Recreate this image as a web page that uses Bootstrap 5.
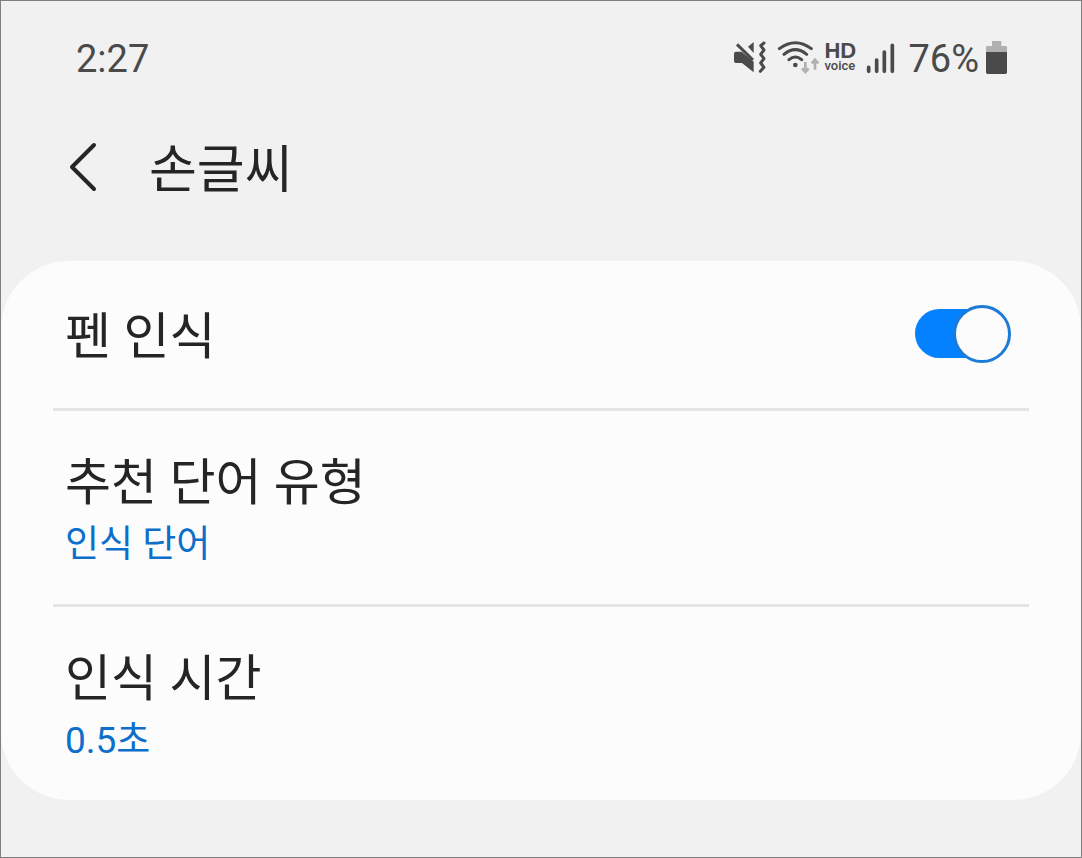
<!DOCTYPE html>
<html lang="ko">
<head>
<meta charset="utf-8">
<meta name="viewport" content="width=device-width, initial-scale=1">
<title>손글씨</title>
<link href="https://cdn.jsdelivr.net/npm/bootstrap@5.3.0/dist/css/bootstrap.min.css" rel="stylesheet">
<style>
  body { background: #f1f1f1; color: #252525; border: 1px solid #808080; font-family: Roboto, "Noto Sans CJK KR", sans-serif; }
  .status-bar { color: #4a4a4a; padding: 36px 73px 0 75px; font-size: 38px; line-height: 44px; }
  .status-icons { gap: 4px; }
  .status-icons svg, .hd-voice { margin-bottom: 5px; }
  .hd-voice { width: 38px; }
  .hd-top { font: 700 22px/18px "Liberation Sans", sans-serif; }
  .hd-bottom { font: 500 13px/11px Roboto, sans-serif; }
  .page-head { padding: 48px 64px 0; height: 180px; gap: 48px; }
  .page-head h1 { font-size: 52px; line-height: 84px; font-weight: 400; }
  .settings { --bs-list-group-bg: #fcfcfc; background: #fcfcfc; border-radius: 68px; padding: 0 52px; }
  .setting { min-height: 196px; padding: 2px 12px 0; border: 0; border-bottom: 3px solid #e5e5e5; background: transparent; color: #252525; font-size: 50px; line-height: 72px; }
  .setting:last-child { border-bottom: 0; min-height: 193px; }
  .setting.switch-row { min-height: 150px; padding: 0 18px 2px 12px; }
  .switch-row label { padding-top: 6px; }
  .setting-value { color: #0b6fcb; font-size: 37px; line-height: 52px; }
  .pen-switch { appearance: none; display: grid; align-items: center; width: 96px; height: 58px; margin: 0; cursor: pointer; }
  .pen-switch::before, .pen-switch::after { content: ""; grid-area: 1 / 1; }
  .pen-switch::before { width: 84px; height: 49px; border-radius: 25px; background: #0381fe; }
  .pen-switch::after { width: 58px; height: 58px; border-radius: 50%; border: 3px solid #1c7bd6; background: #fcfcfc; justify-self: end; }
  .pen-switch:not(:checked)::before { background: #b0b0b0; }
  .pen-switch:not(:checked)::after { justify-self: start; border-color: #909090; }
</style>
</head>
<body class="min-vh-100">
<header>
  <div class="status-bar d-flex justify-content-between">
    <time>2:27</time>
    <div class="status-icons d-flex align-items-center">
      <svg width="42" height="36" viewBox="30 24 126 108" fill="#4a4a4a" aria-hidden="true">
        <path d="M42 68q0-6 6-6h17l36 30v32L66 96H48q-6 0-6-6zM84 47l17-14v33z"/>
        <path d="M51 40l48 47" stroke="#4a4a4a" stroke-width="9"/>
        <path d="M132 36l-10 8 10 13-10 13 10 13-10 13 10 13-11 12" fill="none" stroke="#4a4a4a" stroke-width="9" stroke-linecap="round" stroke-linejoin="round"/>
      </svg>
      <svg width="44" height="36" viewBox="168 24 132 108" fill="none" stroke="#4a4a4a" stroke-width="9" stroke-linecap="round" aria-hidden="true">
        <path d="M178 53q48-36 96 0M192 70q34-28 68 0M207 86q19-16 38 0"/>
        <circle cx="226" cy="102" r="7" fill="#4a4a4a" stroke="none"/>
        <path d="M256 93v29M246 112l10 11 10-11M285 116V87M275 97l10-11 10 11" stroke="#b0b0b0" stroke-width="8" stroke-linecap="butt"/>
      </svg>
      <div class="hd-voice d-flex flex-column"><span class="hd-top">HD</span><span class="hd-bottom">voice</span></div>
      <svg width="30" height="36" viewBox="18 24 90 108" stroke="#4a4a4a" stroke-width="11" stroke-linecap="round" aria-hidden="true">
        <path d="M26 109v12M50 87v34M73 63v58M97 43v78"/>
      </svg>
      <span class="ms-2">76%</span>
      <svg width="25" height="36" viewBox="369 24 75 108" aria-hidden="true">
        <path d="M396 30h28v15h13q4 0 4 4v14h-63V49q0-4 4-4h14z" fill="#b0b0b0"/>
        <path d="M378 63h63v61q0 5-5 5h-53q-5 0-5-5z" fill="#4a4a4a"/>
      </svg>
    </div>
  </div>
  <div class="page-head d-flex align-items-start">
    <a href="#" class="d-flex align-items-center py-2" aria-label="뒤로">
      <svg width="36" height="60" viewBox="0 0 36 60" fill="none" stroke="#252525" stroke-width="4" stroke-linecap="round" stroke-linejoin="round" aria-hidden="true"><path d="M29 8L7 30l22 22"/></svg>
    </a>
    <h1 class="m-0">손글씨</h1>
  </div>
</header>
<main class="settings list-group">
  <div class="setting switch-row list-group-item d-flex align-items-center justify-content-between">
    <label for="pen">펜 인식</label>
    <input id="pen" class="pen-switch" type="checkbox" role="switch" checked>
  </div>
  <button type="button" class="setting list-group-item list-group-item-action d-flex flex-column justify-content-center">
    <span>추천 단어 유형</span><span class="setting-value">인식 단어</span>
  </button>
  <button type="button" class="setting list-group-item list-group-item-action d-flex flex-column justify-content-center">
    <span>인식 시간</span><span class="setting-value">0.5초</span>
  </button>
</main>
<script src="https://cdn.jsdelivr.net/npm/bootstrap@5.3.0/dist/js/bootstrap.bundle.min.js"></script>
</body>
</html>
